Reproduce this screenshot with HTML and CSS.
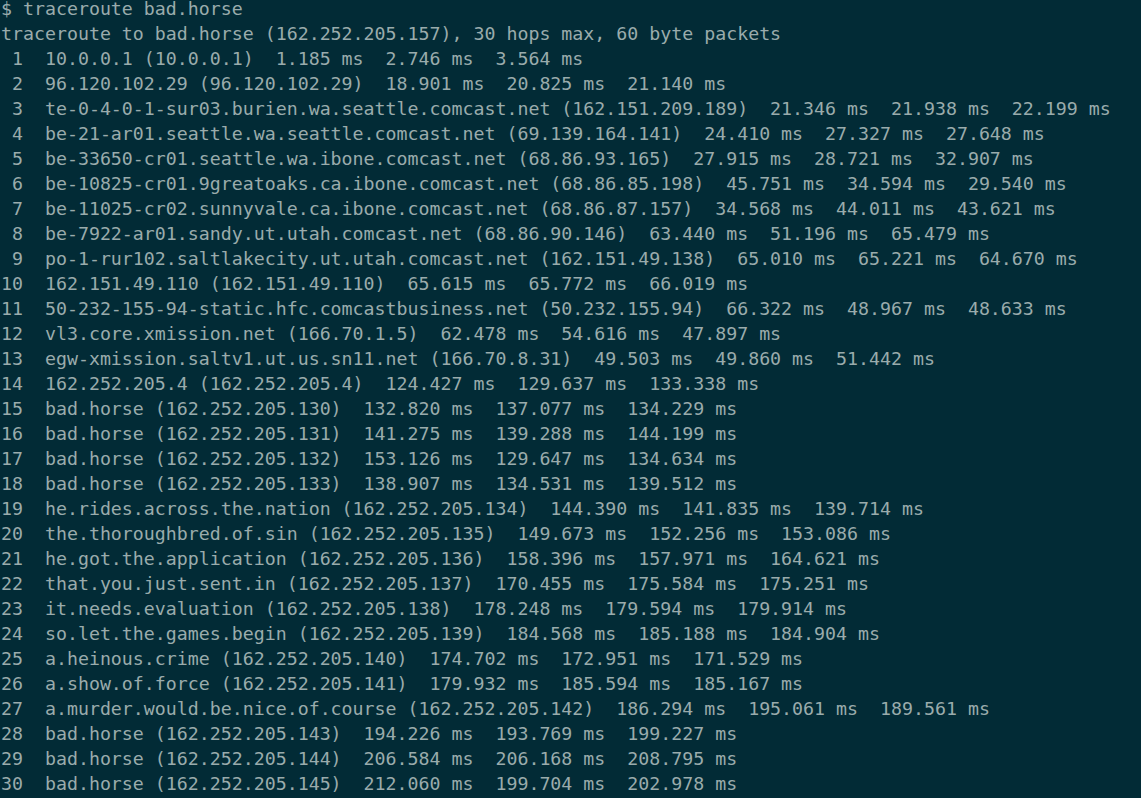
FILE: index.html
```html
<!DOCTYPE html>
<html>
<head>
<meta charset="utf-8">
<link rel="stylesheet" href="styles.css">
</head>
<body>
<pre class="term">$ traceroute bad.horse
traceroute to bad.horse (162.252.205.157), 30 hops max, 60 byte packets
 1  10.0.0.1 (10.0.0.1)  1.185 ms  2.746 ms  3.564 ms
 2  96.120.102.29 (96.120.102.29)  18.901 ms  20.825 ms  21.140 ms
 3  te-0-4-0-1-sur03.burien.wa.seattle.comcast.net (162.151.209.189)  21.346 ms  21.938 ms  22.199 ms
 4  be-21-ar01.seattle.wa.seattle.comcast.net (69.139.164.141)  24.410 ms  27.327 ms  27.648 ms
 5  be-33650-cr01.seattle.wa.ibone.comcast.net (68.86.93.165)  27.915 ms  28.721 ms  32.907 ms
 6  be-10825-cr01.9greatoaks.ca.ibone.comcast.net (68.86.85.198)  45.751 ms  34.594 ms  29.540 ms
 7  be-11025-cr02.sunnyvale.ca.ibone.comcast.net (68.86.87.157)  34.568 ms  44.011 ms  43.621 ms
 8  be-7922-ar01.sandy.ut.utah.comcast.net (68.86.90.146)  63.440 ms  51.196 ms  65.479 ms
 9  po-1-rur102.saltlakecity.ut.utah.comcast.net (162.151.49.138)  65.010 ms  65.221 ms  64.670 ms
10  162.151.49.110 (162.151.49.110)  65.615 ms  65.772 ms  66.019 ms
11  50-232-155-94-static.hfc.comcastbusiness.net (50.232.155.94)  66.322 ms  48.967 ms  48.633 ms
12  vl3.core.xmission.net (166.70.1.5)  62.478 ms  54.616 ms  47.897 ms
13  egw-xmission.saltv1.ut.us.sn11.net (166.70.8.31)  49.503 ms  49.860 ms  51.442 ms
14  162.252.205.4 (162.252.205.4)  124.427 ms  129.637 ms  133.338 ms
15  bad.horse (162.252.205.130)  132.820 ms  137.077 ms  134.229 ms
16  bad.horse (162.252.205.131)  141.275 ms  139.288 ms  144.199 ms
17  bad.horse (162.252.205.132)  153.126 ms  129.647 ms  134.634 ms
18  bad.horse (162.252.205.133)  138.907 ms  134.531 ms  139.512 ms
19  he.rides.across.the.nation (162.252.205.134)  144.390 ms  141.835 ms  139.714 ms
20  the.thoroughbred.of.sin (162.252.205.135)  149.673 ms  152.256 ms  153.086 ms
21  he.got.the.application (162.252.205.136)  158.396 ms  157.971 ms  164.621 ms
22  that.you.just.sent.in (162.252.205.137)  170.455 ms  175.584 ms  175.251 ms
23  it.needs.evaluation (162.252.205.138)  178.248 ms  179.594 ms  179.914 ms
24  so.let.the.games.begin (162.252.205.139)  184.568 ms  185.188 ms  184.904 ms
25  a.heinous.crime (162.252.205.140)  174.702 ms  172.951 ms  171.529 ms
26  a.show.of.force (162.252.205.141)  179.932 ms  185.594 ms  185.167 ms
27  a.murder.would.be.nice.of.course (162.252.205.142)  186.294 ms  195.061 ms  189.561 ms
28  bad.horse (162.252.205.143)  194.226 ms  193.769 ms  199.227 ms
29  bad.horse (162.252.205.144)  206.584 ms  206.168 ms  208.795 ms
30  bad.horse (162.252.205.145)  212.060 ms  199.704 ms  202.978 ms</pre>
</body>
</html>
```
FILE: styles.css
```css
html, body {
  margin: 0;
  padding: 0;
  background: #022b36;
  height: 100%;
  overflow: hidden;
}
.term {
  margin: -4px 0 0 0;
  padding: 0 0 0 1px;
  font-family: "DejaVu Sans Mono", "Liberation Mono", monospace;
  font-size: 18.25px;
  line-height: 25px;
  color: #9aabac;
  white-space: pre;
}
```
